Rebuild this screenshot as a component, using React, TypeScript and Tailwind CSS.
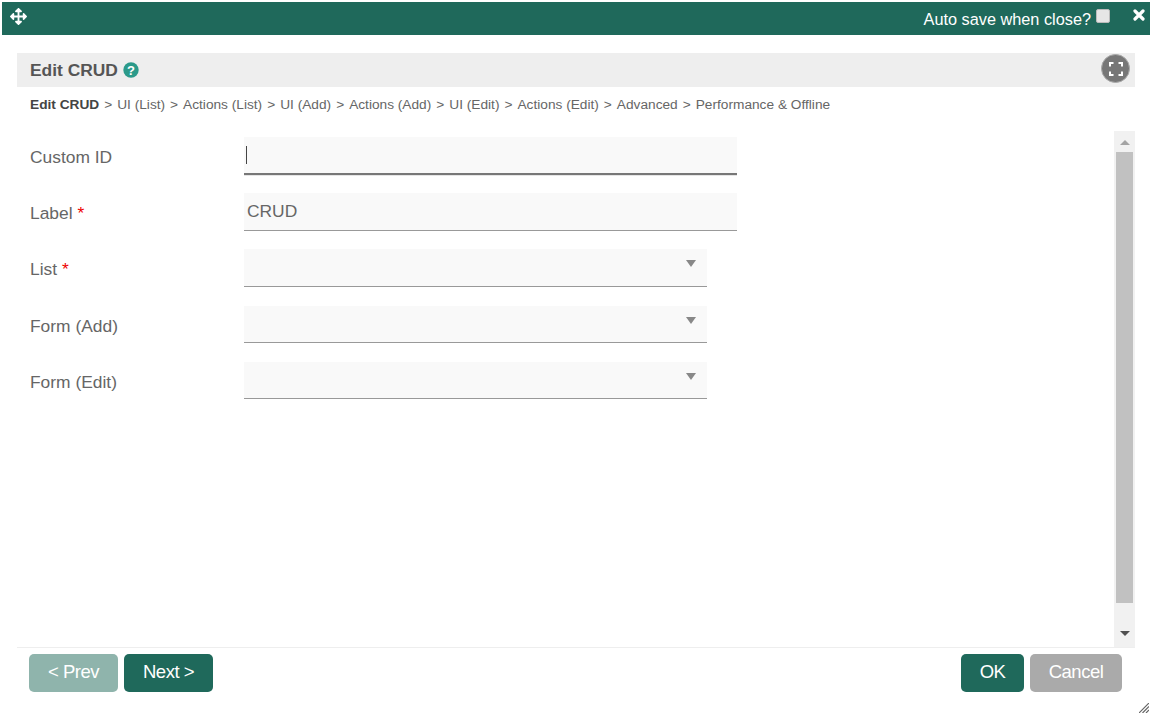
import React from "react";

const crumbs = ["UI (List)", "Actions (List)", "UI (Add)", "Actions (Add)", "UI (Edit)", "Actions (Edit)", "Advanced", "Performance & Offline"];

function Row({ label, required, width, value, select, top, height }: { label: string; required?: boolean; width: string; value?: string; select?: boolean; top: string; height: string }) {
  return (
    <div className={`flex ${top}`}>
      <div className="w-[227px] pl-[13px] pt-[10px] text-[17.4px] leading-[20px] text-[#666]">
        {label}
        {required && <span className="text-[#e00]"> *</span>}
      </div>
      <div className={`relative ${height} ${width} bg-[#f9f9f9] border-b border-[#999] pl-[3px] text-[17.4px] leading-[36px] text-[#666]`}>
        {value}
        {select && (
          <svg className="absolute right-[11px] top-[11px]" width="10" height="8" viewBox="0 0 10 8">
            <path d="M0 0h10L5 7z" fill="#888" />
          </svg>
        )}
      </div>
    </div>
  );
}

export default function App() {
  return (
    <div className="h-[717px] w-[1152px] overflow-hidden bg-white font-['Liberation_Sans',Arial,sans-serif] relative">
      <div className="mx-[2px] mt-[2px] flex h-[33px] items-center justify-between bg-[#1f695b] text-white">
        <svg className="ml-[8px] mb-[4px]" width="17" height="17" viewBox="0 0 512 512" fill="#fff">
          <path d="M352.201 425.775l-79.196 79.196c-9.373 9.373-24.568 9.373-33.941 0l-79.196-79.196c-15.119-15.119-4.411-40.971 16.971-40.97h51.162L228 284H127.196v51.162c0 21.382-25.851 32.09-40.971 16.971L7.029 272.937c-9.373-9.373-9.373-24.569 0-33.941L86.225 159.8c15.119-15.119 40.971-4.411 40.971 16.971V228H228V127.196h-51.23c-21.382 0-32.09-25.851-16.971-40.971l79.196-79.196c9.373-9.373 24.568-9.373 33.941 0l79.196 79.196c15.119 15.119 4.411 40.971-16.971 40.971h-51.162V228h100.804v-51.162c0-21.382 25.851-32.09 40.97-16.971l79.196 79.196c9.373 9.373 9.373 24.569 0 33.941L425.773 352.2c-15.119 15.119-40.971 4.411-40.97-16.971V284H284v100.804h51.23c21.382 0 32.09 25.851 16.971 40.971z" />
        </svg>
        <div className="flex items-center">
          <span className="text-[16.3px] leading-[20px]">Auto save when close?</span>
          <span className="ml-[5px] mb-[5px] h-[14px] w-[14px] rounded-[2px] border border-[#bbb] bg-[#e6e6e6]" />
          <svg className="ml-[23px] mr-[5px] mb-[7px]" width="12" height="12" viewBox="0 0 12 12">
            <path d="M2 2l8 8M10 2l-8 8" stroke="#fff" strokeWidth="3.2" strokeLinecap="round" />
          </svg>
        </div>
      </div>

      <div className="mx-[17px] mt-[18px] flex h-[34px] items-center justify-between bg-[#eee] pl-[13px] pr-[5px]">
        <div className="flex items-center gap-[5px]">
          <span className="text-[17.4px] font-bold text-[#555]">Edit CRUD</span>
          <svg width="16" height="16" viewBox="0 0 16 16">
            <circle cx="8" cy="8" r="7.7" fill="#2b9a8a" />
            <text x="8" y="12.6" textAnchor="middle" fontSize="13" fontWeight="bold" fill="#fff" fontFamily="Liberation Sans">?</text>
          </svg>
        </div>
        <div className="mb-[3px] flex h-[29px] w-[29px] items-center justify-center rounded-full border border-[#aaa] bg-[#777]">
          <svg width="14" height="14" viewBox="0 0 14 14" fill="none" stroke="#fff" strokeWidth="2">
            <path d="M1 4.500V1h3.500M9.500 1H13v3.500M13 9.500V13H9.500M4.500 13H1V9.500" />
          </svg>
        </div>
      </div>

      <div className="ml-[30px] mt-[10px] flex h-[16px] items-center whitespace-pre text-[13.7px] leading-[16px] text-[#666]">
        <b className="text-[#444]">Edit CRUD</b>
        {crumbs.map((c) => (
          <React.Fragment key={c}>
            <span className="mx-[1.2px]">{" > "}</span>
            <span>{c}</span>
          </React.Fragment>
        ))}
      </div>

      <div className="mx-[17px] mt-[18px] flex h-[517px] border-b border-[#eee]">
        <div className="flex-1 pt-[6px]">
          <div className="flex">
            <div className="w-[227px] pl-[13px] pt-[10px] text-[17.4px] leading-[20px] text-[#666]">Custom ID</div>
            <div className="relative h-[38px] w-[493px] bg-[#f9f9f9] border-b-2 border-[#777] shadow-[0_1px_0_#e5e5e5]">
              <span className="absolute left-[2px] top-[9px] h-[18px] w-px bg-[#444]" />
            </div>
          </div>
          <Row label="Label" required width="w-[493px]" height="h-[38px]" value="CRUD" top="mt-[18px]" />
          <Row label="List" required width="w-[463px]" height="h-[38px]" select top="mt-[18px]" />
          <Row label="Form (Add)" width="w-[463px]" height="h-[37px]" select top="mt-[19px]" />
          <Row label="Form (Edit)" width="w-[463px]" height="h-[37px]" select top="mt-[19px]" />
        </div>
        <div className="flex w-[21px] flex-col items-center bg-[#f1f1f1]">
          <svg className="mt-[9px]" width="10" height="5" viewBox="0 0 10 5"><path d="M0 5h10L5 0z" fill="#a3a3a3" /></svg>
          <div className="mt-[7px] h-[451px] w-[17px] bg-[#c1c1c1]" />
          <svg className="mt-[28px]" width="10" height="5" viewBox="0 0 10 5"><path d="M0 0h10L5 5z" fill="#505050" /></svg>
        </div>
      </div>

      <div className="ml-[29px] mr-[30px] mt-[6px] flex justify-between text-[18.5px] text-white">
        <div className="flex gap-[6px]">
          <button className="h-[38px] w-[89px] rounded-[5px] bg-[#8fb4ac] pb-[2px] tracking-[-0.5px]">&lt; Prev</button>
          <button className="h-[38px] w-[89px] rounded-[5px] bg-[#1f695b] pb-[2px] tracking-[-0.5px]">Next &gt;</button>
        </div>
        <div className="flex gap-[6px]">
          <button className="h-[38px] w-[63px] rounded-[5px] bg-[#1f695b] pb-[2px] tracking-[-0.5px]">OK</button>
          <button className="h-[38px] w-[92px] rounded-[5px] bg-[#aaa] pb-[2px] tracking-[-0.5px]">Cancel</button>
        </div>
      </div>

      <svg className="absolute right-[3px] bottom-[4px]" width="10" height="10" viewBox="0 0 10 10" stroke="#666" strokeWidth="1.2">
        <path d="M0 10L10 0M3.500 10L10 3.500M7 10L10 7" />
      </svg>
    </div>
  );
}
